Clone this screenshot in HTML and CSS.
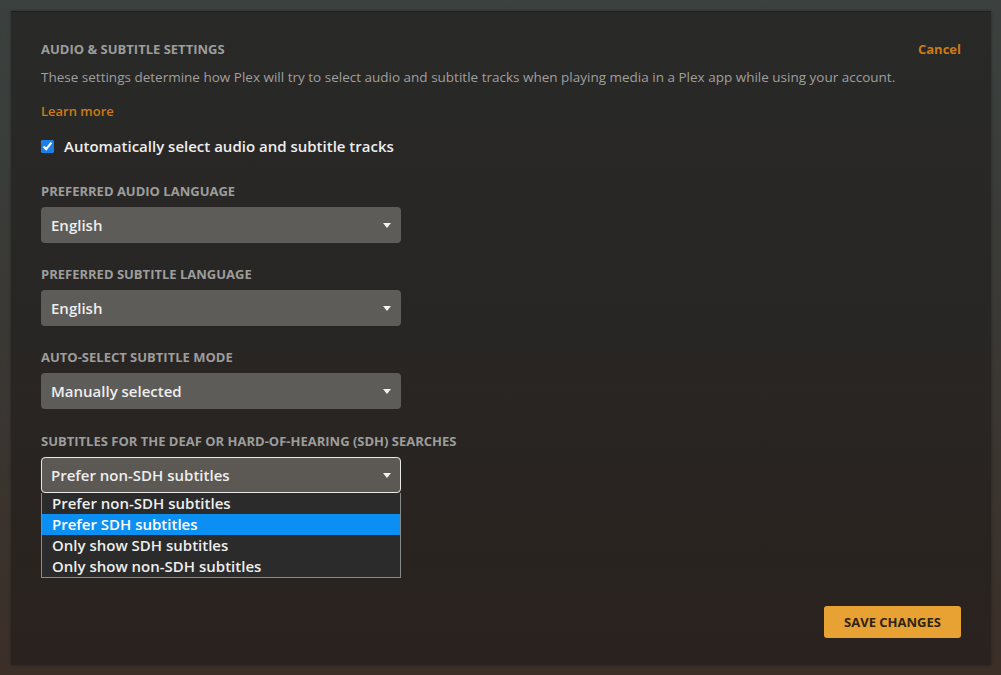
FILE: index.html
```html
<!DOCTYPE html>
<html lang="en">
<head>
    <meta charset="UTF-8">
    <meta name="viewport" content="width=device-width, initial-scale=1.0">
    <title>Plex - Audio &amp; Subtitle Settings</title>
    <link rel="stylesheet" href="styles.css">
</head>
<body>
    <div class="panel">
        <div class="header">
            <h2>Audio &amp; Subtitle Settings</h2>
            <a href="#" class="link">Cancel</a>
        </div>
        <p class="desc">These settings determine how Plex will try to select audio and subtitle tracks when playing media in a Plex app while using your account.</p>
        <a href="#" class="link learn">Learn more</a>

        <label class="auto">
            <input type="checkbox" checked>
            <span>Automatically select audio and subtitle tracks</span>
        </label>

        <div class="field">
            <div class="field-label">Preferred audio language</div>
            <div class="select">English</div>
        </div>

        <div class="field">
            <div class="field-label">Preferred subtitle language</div>
            <div class="select">English</div>
        </div>

        <div class="field">
            <div class="field-label">Auto-select subtitle mode</div>
            <div class="select">Manually selected</div>
        </div>

        <div class="field sdh">
            <div class="field-label">Subtitles for the deaf or hard-of-hearing (SDH) searches</div>
            <div class="select-wrap">
                <div class="select open">Prefer non-SDH subtitles</div>
                <ul class="options">
                    <li>Prefer non-SDH subtitles</li>
                    <li class="active">Prefer SDH subtitles</li>
                    <li>Only show SDH subtitles</li>
                    <li>Only show non-SDH subtitles</li>
                </ul>
            </div>
        </div>

        <div class="footer">
            <button class="btn-save">Save Changes</button>
        </div>
    </div>
</body>
</html>
```

FILE: styles.css
```css
* {
    margin: 0;
    padding: 0;
    box-sizing: border-box;
}

html, body {
    height: 100%;
}

body {
    font-family: 'Open Sans', 'Noto Sans', sans-serif;
    background: linear-gradient(180deg, #3b413f 0%, #3a3834 50%, #3b2f28 100%);
    padding: 11px 10px 10px 11px;
    color: #eeeeee;
    overflow: hidden;
}

.panel {
    height: 654px;
    display: flex;
    flex-direction: column;
    padding: 28px 30px 27px 30px;
    background: linear-gradient(180deg, #282928 0%, #282624 50%, #2a221e 100%);
    border-top: 1px solid #1f2120;
    box-shadow: 0 0 3px rgba(0, 0, 0, 0.35);
}

.header {
    display: flex;
    justify-content: space-between;
    align-items: center;
    line-height: 18px;
}

.header h2 {
    font-size: 13px;
    font-weight: 700;
    text-transform: uppercase;
    color: #9d9d9c;
}

.link {
    color: #cc7b19;
    font-size: 13px;
    font-weight: 700;
    text-decoration: none;
}

.desc {
    margin-top: 10px;
    font-size: 13.5px;
    line-height: 18px;
    color: #a09f9e;
}

.learn {
    display: block;
    margin-top: 16px;
    line-height: 18px;
    font-weight: 600;
}

.auto {
    display: flex;
    align-items: center;
    gap: 10px;
    margin-top: 15px;
    line-height: 22px;
    font-size: 15px;
    font-weight: 600;
    color: #eeeeee;
}

.auto input {
    width: 13px;
    height: 13px;
    margin: 0;
    accent-color: #1a7fe8;
}

.field {
    margin-top: 23px;
}

.auto + .field {
    margin-top: 26px;
}

.field.sdh {
    margin-top: 24px;
}

.field-label {
    font-size: 13px;
    font-weight: 700;
    line-height: 16px;
    text-transform: uppercase;
    color: #9d9d9c;
}

.select-wrap {
    position: relative;
    width: 360px;
    margin-top: 8px;
}

.select {
    position: relative;
    width: 360px;
    height: 36px;
    margin-top: 8px;
    padding: 0 10px;
    line-height: 36px;
    font-size: 15px;
    font-weight: 600;
    color: #eeeeee;
    background: #5e5c59;
    border-radius: 4px;
}

/* dropdown caret */
.select:after {
    content: "";
    position: absolute;
    right: 10px;
    top: 16px;
    border-left: 4px solid transparent;
    border-right: 4px solid transparent;
    border-top: 5px solid #f2f2f2;
}

.select.open {
    margin-top: 0;
    border: 1px solid #e8e8e8;
    padding: 0 9px;
    line-height: 34px;
    background: #5c5955;
}

.select.open:after {
    right: 9px;
    top: 15px;
}

.options {
    position: absolute;
    top: 36px;
    left: 0;
    width: 360px;
    list-style: none;
    background: #2b2b2b;
    border: 1px solid #8a8a8a;
    border-top: none;
    z-index: 2;
}

.options li {
    height: 21px;
    line-height: 21px;
    padding-left: 10px;
    font-size: 15px;
    font-weight: 600;
    color: #eeeeee;
}

.options li.active {
    background: #0c8ff2;
    color: #ffffff;
}

.footer {
    margin-top: auto;
    display: flex;
    justify-content: flex-end;
}

.btn-save {
    width: 137px;
    height: 32px;
    border: none;
    border-radius: 3px;
    background: #e8a233;
    color: #2e2415;
    font-family: inherit;
    font-size: 13px;
    font-weight: 700;
    text-transform: uppercase;
    cursor: pointer;
}
```
